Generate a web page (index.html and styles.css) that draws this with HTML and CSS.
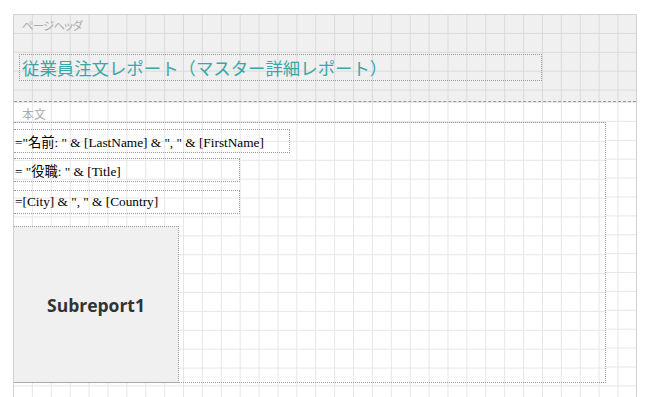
FILE: index.html
```html
<!DOCTYPE html>
<html lang="ja">
<head>
<meta charset="utf-8">
<link rel="stylesheet" href="styles.css">
</head>
<body>
<div class="canvas">
  <section class="band band-header">
    <div class="band-label label-header">ページヘッダ</div>
    <div class="title-box">従業員注文レポート（マスター詳細レポート）</div>
  </section>
  <section class="band band-body">
    <div class="band-label label-body">本文</div>
    <div class="container">
      <div class="field field-wide">="名前: " &amp; [LastName] &amp; ", " &amp; [FirstName]</div>
      <div class="field field-narrow field-2">= "役職: " &amp; [Title]</div>
      <div class="field field-narrow field-3">=[City] &amp; ", " &amp; [Country]</div>
      <div class="subreport">Subreport1</div>
    </div>
  </section>
</div>
</body>
</html>
```
FILE: styles.css
```css
html, body {
  margin: 0;
  padding: 0;
  background: #ffffff;
  overflow: hidden;
}
body {
  width: 650px;
  height: 397px;
}
.canvas {
  margin: 14px 0 0 13px;
  width: 622px;
  border-left: 1px solid #d2d2d2;
  border-right: 1px solid #d2d2d2;
  border-top: 1px solid #d2d2d2;
  display: flex;
  flex-direction: column;
}
.band {
  display: flex;
  flex-direction: column;
  align-items: flex-start;
}
.band-header {
  height: 86px;
  background-color: #f0f0f0;
  background-image:
    linear-gradient(to right, transparent calc(100% - 1px), #dadada 0),
    linear-gradient(to bottom, transparent calc(100% - 1px), #dadada 0);
  background-size: 0.5cm 0.5cm;
  border-bottom: 1px dashed #9a9a9a;
}
.band-body {
  height: 300px;
  background-color: #ffffff;
  background-image:
    linear-gradient(to right, transparent calc(100% - 1px), #e6e6e6 0),
    linear-gradient(to bottom, transparent calc(100% - 1px), #e6e6e6 0);
  background-size: 0.5cm 0.5cm;
  background-position: 0 1px;
}
.band-label {
  font-family: "Noto Sans CJK JP", sans-serif;
  font-size: 12px;
  color: #acacac;
  line-height: 16px;
  margin-left: 8px;
}
.label-header {
  margin-top: 2px;
  font-size: 11.5px;
  letter-spacing: -0.9px;
  font-feature-settings: "palt";
}
.label-body {
  margin-top: 4px;
  height: 16px;
}
.title-box {
  margin-top: 21px;
  margin-left: 5px;
  width: 519px;
  height: 25px;
  border: 1px dotted #9a9a9a;
  font-family: "Noto Sans CJK JP", sans-serif;
  font-size: 17.4px;
  line-height: 25px;
  color: #3aa7a7;
  padding-left: 2px;
  box-sizing: content-box;
  white-space: nowrap;
}
.container {
  width: 591px;
  height: 259px;
  border: 1px dotted #9a9a9a;
  border-left: none;
  background-color: #ffffff;
  background-image:
    linear-gradient(to right, transparent calc(100% - 1px), #e6e6e6 0),
    linear-gradient(to bottom, transparent calc(100% - 1px), #e6e6e6 0);
  background-size: 0.5cm 0.5cm;
  display: flex;
  flex-direction: column;
  align-items: flex-start;
}
.field {
  box-sizing: border-box;
  height: 24px;
  border: 1px dotted #9a9a9a;
  border-left: none;
  font-family: "Liberation Serif", "Noto Sans CJK JP", serif;
  font-size: 13.3px;
  color: #000;
  display: flex;
  align-items: center;
  padding-left: 1px;
  white-space: nowrap;
}
.field-wide {
  width: 276px;
  margin-top: 6px;
}
.field-narrow {
  width: 226px;
}
.field-2 {
  margin-top: 5px;
}
.field-3 {
  margin-top: 8px;
  height: 24px;
}
.subreport {
  box-sizing: border-box;
  margin-top: 12px;
  width: 165px;
  height: 157px;
  margin-bottom: -1px;
  background: #f0f0f0;
  border-top: 1px dotted #9a9a9a;
  border-right: 1px dotted #9a9a9a;
  border-bottom: 1px solid #a8a8a8;
  display: flex;
  align-items: center;
  justify-content: center;
  font-family: "Open Sans", sans-serif;
  font-weight: 700;
  font-size: 17.5px;
  color: #333333;
  position: relative;
}
```
